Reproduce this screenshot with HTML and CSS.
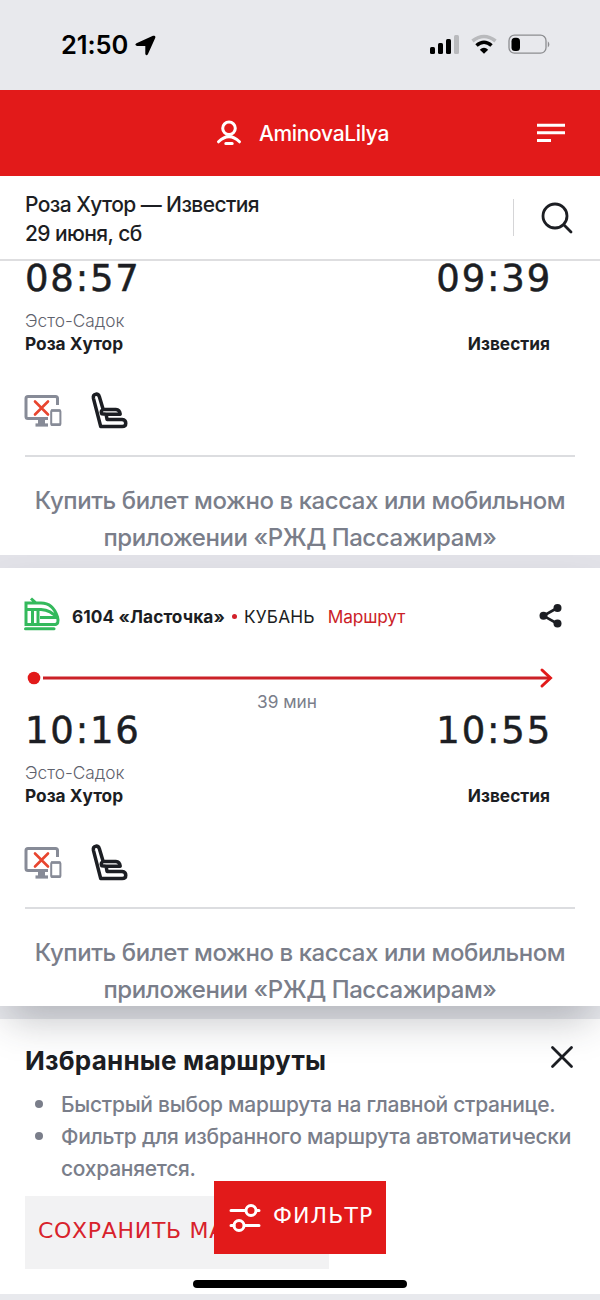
FILE: index.html
```html
<!DOCTYPE html>
<html lang="ru">
<head>
<meta charset="utf-8">
<title>РЖД</title>
<link rel="stylesheet" href="styles.css">
</head>
<body>
<svg class="defs" width="0" height="0">
  <symbol id="noweb" viewBox="0 0 38 34">
    <g fill="none" stroke="#878b97">
      <path d="M33.500 11V4.500Q33.500 2.500 31.500 2.500H4Q2 2.500 2 4.500V22.500Q2 24.500 4 24.500H24" stroke-width="3"/>
      <path d="M11.500 31H24" stroke-width="3.200"/>
      <path d="M14 25.500H21V30H14Z" fill="#878b97" stroke="none"/>
      <rect x="27.200" y="16.500" width="9.200" height="14.500" rx="1" stroke-width="2"/>
      <path d="M27 16.500H36.500M27 30.500H36.500" stroke-width="2.600"/>
    </g>
    <path d="M11 7.500L24 20.500M24 7.500L11 20.500" stroke="#e8452f" stroke-width="2.600" stroke-linecap="round"/>
  </symbol>
  <symbol id="seat" viewBox="0 0 38 38">
    <path d="M10 35.500L2.500 6.500Q1.800 2.600 5 2.200Q7.800 2 8.600 5L12.500 18H25.500Q29.500 18.300 30 22.800H15.500L16.500 28.200H32Q35.700 28.600 35.700 32Q35.700 35.500 32 35.500ZM12.500 18Q9.500 19.500 11 22.300L15.500 22.800" fill="none" stroke="#1c1e23" stroke-width="3.600" stroke-linejoin="round" stroke-linecap="round"/>
  </symbol>
</svg>

<div class="status">
  <div class="clock"><span>21:50</span>
    <svg width="21" height="21" viewBox="0 0 21 21"><path d="M1.500 8.200L18 .800Q21 0 20.200 3L13 19Q11.500 21.500 10.300 19V11H2Q-1 9.800 1.500 8.200Z"/></svg>
  </div>
  <svg width="122" height="22" viewBox="0 0 122 22">
    <rect x="1" y="13" width="5" height="7" rx="1.500"/><rect x="9" y="9" width="5" height="11" rx="1.500"/><rect x="17" y="5" width="5" height="15" rx="1.500"/><rect x="25" y="1" width="5" height="19" rx="1.500" fill="#b9babd"/>
    <g fill="none" stroke-width="3.600"><path d="M43.500 7Q55 -2 66.500 7" stroke="#b9babd"/><path d="M47.500 11.500Q55 5 62.500 11.500" stroke="#000"/></g>
    <path d="M50.800 15.700Q55 12 59.200 15.700L55 19.800Z"/>
    <rect x="80" y="1.200" width="37" height="18" rx="5.500" fill="none" stroke="#8c8d90" stroke-width="1.300"/><rect x="82.500" y="3.700" width="8.500" height="13.200" rx="3.500"/><path d="M118.800 7.300Q122 10.500 118.800 13.500Z" fill="#8c8d90"/>
  </svg>
</div>

<header class="top">
  <div class="user">
    <svg width="26" height="26" viewBox="0 0 26 26" fill="none" stroke="#fff" stroke-width="3" stroke-linecap="round"><circle cx="13" cy="8.300" r="6.300"/><path d="M2.500 21.800Q13 11.500 23.500 21.800M9.800 23.500H16.200"/></svg>
    <span class="login">AminovaLilya</span>
  </div>
  <svg width="28" height="20" viewBox="0 0 28 20" stroke="#fff" stroke-width="3"><path d="M0 2.200H28M0 9.800H28M0 17.500H14"/></svg>
</header>

<div class="query">
  <div class="query-text">Роза Хутор — Известия<br>29 июня, сб</div>
  <div class="query-btn"><svg width="32" height="32" viewBox="0 0 32 32" fill="none" stroke="#1c1e23" stroke-width="2.800" stroke-linecap="round"><circle cx="14" cy="14" r="12"/><path d="M22.800 22.800L30 30"/></svg></div>
</div>

<main>
  <section class="trip cut">
    <div class="times"><span>08:57</span><span>09:39</span></div>
    <div class="places"><div class="st">Эсто-Садок</div><div class="both"><span>Роза Хутор</span><span>Известия</span></div></div>
    <div class="icons"><svg width="38" height="34"><use href="#noweb"/></svg><svg width="37" height="37"><use href="#seat"/></svg></div>
    <div class="note">Купить билет можно в кассах или мобильном<br>приложении «РЖД Пассажирам»</div>
  </section>

  <section class="trip full">
    <div class="train">
      <svg class="emu" width="37" height="34" viewBox="0 0 37 34" fill="none" stroke="#34b95c" stroke-width="3"><path d="M2 6H17Q29 6 33.500 20Q35.500 27.500 30.500 27.500H2ZM2 12.500H17Q27 13 33 21M8.500 13V27M14 13V27M16 20.500H32M7 1.500L12 6"/><path d="M1.500 31.800H30" stroke-linecap="round"/></svg>
      <span class="num">6104 «Ласточка»</span><i class="dot"></i><span class="brand">КУБАНЬ</span><a class="route">Маршрут</a>
      <svg class="share" width="24" height="26" viewBox="0 0 24 26" fill="#1c1e23"><path d="M19 4.500L4.500 12.800L19 21" fill="none" stroke="#1c1e23" stroke-width="2.600"/><circle cx="4.500" cy="12.800" r="4"/><circle cx="18.500" cy="5" r="4"/><circle cx="18.500" cy="20.500" r="4"/></svg>
    </div>
    <svg class="line" width="528" height="22" viewBox="0 0 528 22"><circle cx="9" cy="11" r="6.300" fill="#e21a1a"/><path d="M18 11H525" fill="none" stroke="#cb2127" stroke-width="3"/><path d="M517 3L525.500 11L517 19" fill="none" stroke="#e21a1a" stroke-width="3" stroke-linecap="round"/></svg>
    <div class="dur">39 мин</div>
    <div class="times"><span>10:16</span><span>10:55</span></div>
    <div class="places"><div class="st">Эсто-Садок</div><div class="both"><span>Роза Хутор</span><span>Известия</span></div></div>
    <div class="icons"><svg width="38" height="34"><use href="#noweb"/></svg><svg width="37" height="37"><use href="#seat"/></svg></div>
    <div class="note">Купить билет можно в кассах или мобильном<br>приложении «РЖД Пассажирам»</div>
  </section>

  <section class="fav">
    <div class="fav-head"><h2>Избранные маршруты</h2><svg width="24" height="24" viewBox="0 0 24 24" stroke="#1c1e23" stroke-width="2.800" stroke-linecap="round"><path d="M2.500 2.500L21.500 21.500M21.500 2.500L2.500 21.500"/></svg></div>
    <ul><li>Быстрый выбор маршрута на главной странице.</li><li>Фильтр для избранного маршрута автоматически<br>сохраняется.</li></ul>
    <button class="save">СОХРАНИТЬ МАРШРУТ</button>
  </section>
</main>
<button class="filter"><svg width="32" height="30" viewBox="0 0 32 30" fill="none" stroke="#fff" stroke-width="3" stroke-linecap="round"><path d="M2 7.500H16M28 7.500H30M2 22.500H5M16 22.500H30"/><circle cx="22" cy="7.500" r="5"/><circle cx="10" cy="22.500" r="5"/></svg><span>ФИЛЬТР</span></button>
<div class="home"></div>
</body>
</html>
```
FILE: styles.css
```css
* { box-sizing: border-box; }
body { margin: 0; width: 600px; height: 1300px; overflow: hidden; position: relative; background: #e8e9ed; color: #1c1e23; font: 500 21px/29px Inter, "Noto Sans", sans-serif; white-space: nowrap; }
svg { display: block; flex: none; }
.defs { position: absolute; }
.status { height: 90px; display: flex; justify-content: space-between; align-items: center; padding: 0 49px 0 61px; }
.clock { display: flex; gap: 7px; align-items: center; font: 600 25.5px/30px Inter, sans-serif; letter-spacing: -.1px; color: #000; }
.top { height: 86px; background: #e21a1a; color: #fff; display: flex; align-items: center; padding: 0 35px 0 216px; justify-content: space-between; }
.user { display: flex; align-items: center; gap: 17px; }
.login { letter-spacing: -.34px; }
.query { height: 85px; background: #fff; border-bottom: 2px solid #dedee0; padding: 0 27px 0 25px; display: flex; justify-content: space-between; align-items: center; }
.query-text { letter-spacing: -.59px; padding-top: 3px; }
.query-btn { border-left: 1px solid #d5d5d7; height: 37px; padding-left: 27px; display: flex; align-items: center; }
.trip { background: #fff; padding: 0 25px; position: relative; display: flow-root; }
.trip.cut { height: 294px; margin-bottom: 13px; }
main { background: linear-gradient(#e2e2e8, #e2e2e8) 0 294px / 100% 13px no-repeat; }
.trip.full { height: 438px; margin-bottom: 13px; padding-top: 24px; box-shadow: 0 22px 38px -8px rgba(40, 42, 55, .28); z-index: 2; }
.cut .times { margin-top: -1px; }
.times { height: 36px; display: flex; justify-content: space-between; padding: 1px 23px 0 0; font: 400 37px/36px "DejaVu Sans", sans-serif; letter-spacing: 1.8px; -webkit-text-stroke: .5px #1c1e23; }
.places { margin-top: 13px; font-size: 17.3px; line-height: 23px; }
.st { font-weight: 300; color: #5f626d; }
.both { display: flex; justify-content: space-between; padding-right: 25px; font-weight: 700; }
.icons { display: flex; gap: 29px; margin: 37px 0 0 -1px; height: 37px; align-items: center; }
.note { margin-top: 26px; border-top: 2px solid #dcdde0; padding-top: 25px; text-align: center; font-size: 24px; line-height: 37px; letter-spacing: -.43px; color: #7a7e8a; }
.train { height: 48px; display: flex; align-items: center; font-size: 17.3px; margin-left: -1px; }
.emu { margin-bottom: 4px; }
.num { font-weight: 700; margin-left: 11px; letter-spacing: .08px; }
.dot { width: 5px; height: 5px; border-radius: 50%; background: #d2202a; margin: 0 7px; }
.brand { font-weight: 400; letter-spacing: .2px; }
.route { font-weight: 400; color: #cb2127; margin-left: 13px; letter-spacing: -.15px; }
.share { margin-left: auto; margin-right: 12px; }
.line { margin-top: 27px; height: 22px; }
.dur { margin-top: 1px; height: 22px; line-height: 24px; text-align: center; padding-right: 26px; font-size: 17.3px; font-weight: 400; color: #7a7e8a; }
.fav { height: 275px; background: #fff; padding: 20px 25px 0; }
.fav-head { display: flex; justify-content: space-between; height: 40px; }
h2 { margin: 0; font-size: 26px; line-height: 43px; font-weight: 700; letter-spacing: .22px; }
.fav-head svg { margin: 6px 1px 0 0; }
ul { margin: 10px 0 0; padding: 0 0 0 36px; list-style: none; line-height: 32px; color: #7a7e8a; letter-spacing: -.27px; }
li { position: relative; }
li::before { content: ""; position: absolute; left: -26px; top: 11px; width: 8px; height: 8px; border-radius: 50%; background: #7a7e8a; }
button { border: 0; font: 400 22px/30px "DejaVu Sans", sans-serif; white-space: nowrap; }
.save { display: block; margin-top: 11px; height: 73px; width: 304px; text-align: left; padding: 0 0 4px 13px; background: #f2f2f3; color: #d8222b; letter-spacing: .7px; }
.filter { position: absolute; z-index: 5; left: 214px; top: 1181px; width: 172px; height: 73px; background: #e21a1a; color: #fff; display: flex; align-items: center; gap: 12px; padding: 0 0 0 15px; letter-spacing: 1.1px; }
.filter span { padding-bottom: 3px; }
.home { position: absolute; z-index: 6; left: 193px; top: 1280px; width: 214px; height: 8px; border-radius: 4px; background: #000; }
```
